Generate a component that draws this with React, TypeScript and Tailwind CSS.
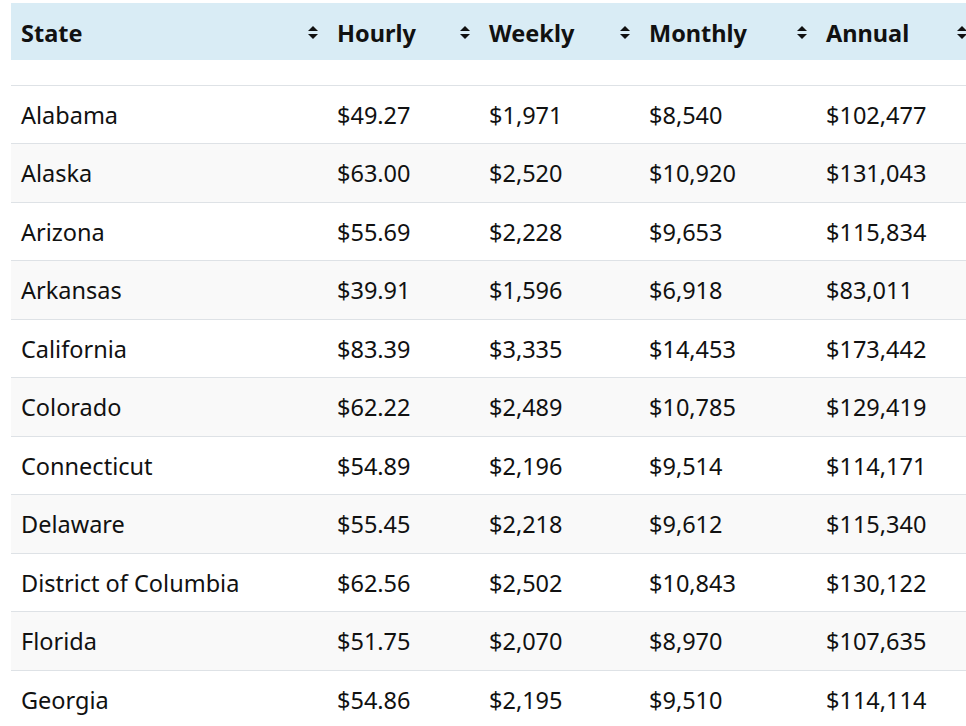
import React from "react";

const rows = [
  ["Alabama", "$49.27", "$1,971", "$8,540", "$102,477"],
  ["Alaska", "$63.00", "$2,520", "$10,920", "$131,043"],
  ["Arizona", "$55.69", "$2,228", "$9,653", "$115,834"],
  ["Arkansas", "$39.91", "$1,596", "$6,918", "$83,011"],
  ["California", "$83.39", "$3,335", "$14,453", "$173,442"],
  ["Colorado", "$62.22", "$2,489", "$10,785", "$129,419"],
  ["Connecticut", "$54.89", "$2,196", "$9,514", "$114,171"],
  ["Delaware", "$55.45", "$2,218", "$9,612", "$115,340"],
  ["District of Columbia", "$62.56", "$2,502", "$10,843", "$130,122"],
  ["Florida", "$51.75", "$2,070", "$8,970", "$107,635"],
  ["Georgia", "$54.86", "$2,195", "$9,510", "$114,114"],
];

const columns = [
  { label: "State", width: "w-[316px]" },
  { label: "Hourly", width: "w-[152px]" },
  { label: "Weekly", width: "w-[160px]" },
  { label: "Monthly", width: "w-[177px]" },
  { label: "Annual", width: "w-[160px]" },
];

function SortIcon() {
  return (
    <svg width="10" height="13" viewBox="0 0 10 13" className="shrink-0 -mt-[3px]">
      <path d="M5 0 L10 5 L0 5 Z" fill="#111" />
      <path d="M0 8 L10 8 L5 13 Z" fill="#111" />
    </svg>
  );
}

export default function App() {
  return (
    <div
      className="h-screen w-screen overflow-hidden bg-white pt-[3px] pl-[11px]"
      style={{ fontFamily: '"Noto Sans", "Open Sans", sans-serif' }}
    >
      <table className="table-fixed w-[965px] border-collapse text-[23.5px] text-[#111]">
        <thead>
          <tr className="bg-[#d9ecf5]">
            {columns.map((col) => (
              <th key={col.label} className={`${col.width} h-[57px] p-0 font-bold text-left`}>
                <div className="flex items-center justify-between pl-[10px] pr-[9px] pt-[5px]">
                  <span>{col.label}</span>
                  <SortIcon />
                </div>
              </th>
            ))}
          </tr>
        </thead>
        <tbody>
          <tr>
            <td colSpan={5} className="h-[25px] p-0 border-b border-[#dee2e6]"></td>
          </tr>
          {rows.map((r, i) => (
            <tr key={r[0]} className={i % 2 === 1 ? "bg-[#f9f9f9]" : "bg-white"}>
              {r.map((c, j) => (
                <td
                  key={j}
                  className="h-[58.5px] px-[10px] pt-[2px] pb-0 border-b border-[#dee2e6] whitespace-nowrap"
                >
                  {c}
                </td>
              ))}
            </tr>
          ))}
        </tbody>
      </table>
    </div>
  );
}
